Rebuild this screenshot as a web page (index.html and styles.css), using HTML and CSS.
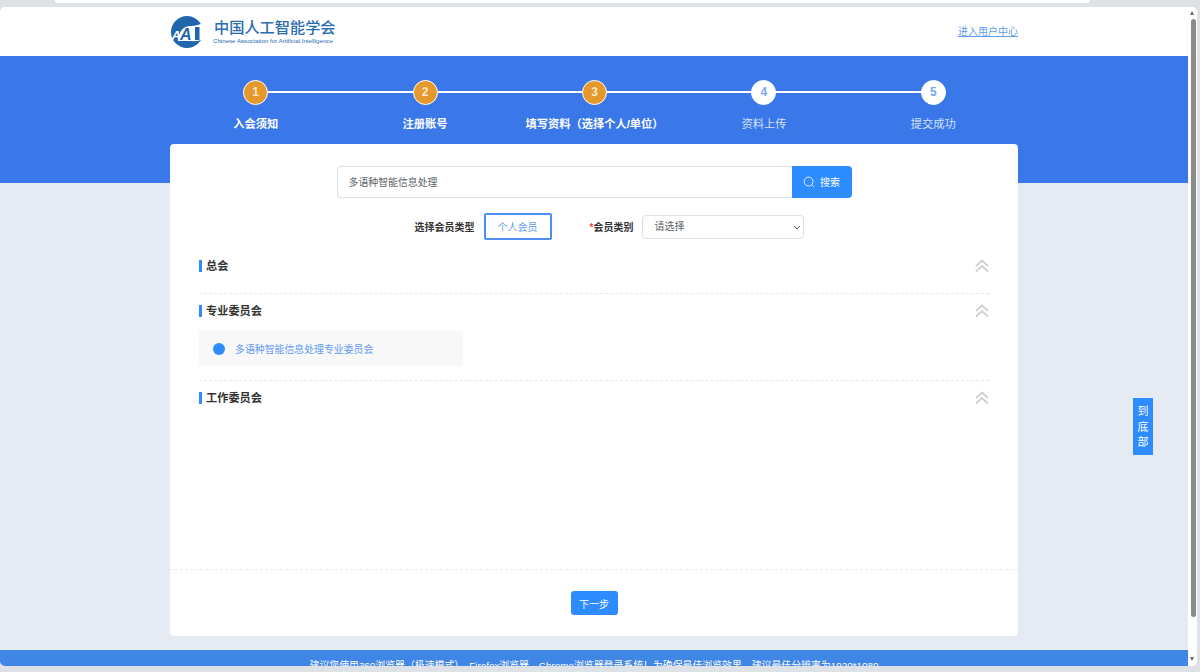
FILE: index.html
```html
<!DOCTYPE html>
<html lang="zh-CN">
<head>
    <meta charset="UTF-8">
    <meta name="viewport" content="width=device-width, initial-scale=1.0">
    <title>入会申请</title>
    <link rel="stylesheet" href="styles.css">
</head>
<body>
    <div class="browser-top"><div class="omnibox"></div></div>

    <div class="browser-window">
        <div class="page">
            <header class="site-header">
                <div class="logo">
                    <svg class="logo-mark" viewBox="0 0 32 32" width="32" height="32">
                        <circle cx="16" cy="16" r="16" fill="#1f66ad"/>
                        <path d="M7 25 C8 14 13 10 20 10 C24 10 28 9 32 7 L32 23 C27 26 22 25 16 25 Z" fill="#fff"/>
                        <text x="0.5" y="24" class="logo-a-light">A</text>
                        <text x="9" y="24" class="logo-a">A</text>
                        <rect x="24" y="11" width="4.5" height="13" fill="#1f66ad"/>
                    </svg>
                    <div class="logo-text">
                        <div class="logo-cn">中国人工智能学会</div>
                        <div class="logo-en">Chinese Association for Artificial Intelligence</div>
                    </div>
                </div>
                <a class="user-link" href="#">进入用户中心</a>
            </header>

            <section class="banner">
                <div class="steps">
                    <div class="step done"><span class="step-num">1</span><span class="step-label">入会须知</span></div>
                    <div class="step done"><span class="step-num">2</span><span class="step-label">注册账号</span></div>
                    <div class="step done"><span class="step-num">3</span><span class="step-label">填写资料（选择个人/单位）</span></div>
                    <div class="step"><span class="step-num">4</span><span class="step-label">资料上传</span></div>
                    <div class="step"><span class="step-num">5</span><span class="step-label">提交成功</span></div>
                </div>
            </section>

            <main class="content">
                <div class="card">
                    <div class="card-body">
                        <div class="search-row">
                            <input class="search-input" type="text" value="多语种智能信息处理">
                            <button class="search-btn" type="button">
                                <svg viewBox="0 0 14 14" width="12" height="12" fill="none" stroke="#fff" stroke-width="1"><circle cx="6.5" cy="6.5" r="5.2"/><path d="M10.4 10.4 L12.6 12.6"/></svg>
                                搜索
                            </button>
                        </div>

                        <div class="type-row">
                            <span class="type-label">选择会员类型</span>
                            <button class="type-btn" type="button">个人会员</button>
                            <span class="type-label category-label"><i>*</i>会员类别</span>
                            <div class="select-wrap">
                                <select class="type-select"><option>请选择</option></select>
                                <svg class="select-arrow" viewBox="0 0 8 5" width="8" height="5"><path d="M1 1 L4 4 L7 1"/></svg>
                            </div>
                        </div>

                        <div class="group first">
                            <div class="group-head">
                                <h2>总会</h2>
                                <svg class="chevrons" viewBox="0 0 14 14" width="14" height="14"><path d="M1 7 L7 1.5 L13 7 M1 12.5 L7 7 L13 12.5"/></svg>
                            </div>
                        </div>

                        <div class="group">
                            <div class="group-head">
                                <h2>专业委员会</h2>
                                <svg class="chevrons" viewBox="0 0 14 14" width="14" height="14"><path d="M1 7 L7 1.5 L13 7 M1 12.5 L7 7 L13 12.5"/></svg>
                            </div>
                            <div class="group-item"><span class="dot"></span>多语种智能信息处理专业委员会</div>
                        </div>

                        <div class="group last">
                            <div class="group-head">
                                <h2>工作委员会</h2>
                                <svg class="chevrons" viewBox="0 0 14 14" width="14" height="14"><path d="M1 7 L7 1.5 L13 7 M1 12.5 L7 7 L13 12.5"/></svg>
                            </div>
                        </div>
                    </div>

                    <div class="card-foot">
                        <button class="next-btn" type="button">下一步</button>
                    </div>
                </div>
            </main>

            <footer class="site-footer">建议您使用360浏览器（极速模式）、Firefox浏览器、Chrome浏览器登录系统！为确保最佳浏览效果，建议最佳分辨率为1920*1080</footer>

            <a class="to-bottom" href="#">到底部</a>
        </div>

        <div class="scrollbar">
            <span class="arrow-up"></span>
            <div class="thumb"></div>
            <span class="arrow-down"></span>
        </div>
    </div>
</body>
</html>
```

FILE: styles.css
```css
/* Basic Reset */
* {
    margin: 0;
    padding: 0;
    box-sizing: border-box;
    font-family: "Liberation Sans", "Noto Sans CJK SC", sans-serif;
}

body {
    width: 1200px;
    height: 672px;
    overflow: hidden;
    background-color: #dee1e6;
}

/* Browser frame */
.browser-top {
    height: 7px;
    padding-left: 55px;
}

.omnibox {
    width: 1035px;
    height: 3px;
    background-color: #fff;
    border-radius: 0 0 6px 6px;
}

.browser-window {
    display: flex;
    width: 1197px;
    height: 659px;
    background-color: #fff;
    border-radius: 5px;
    overflow: hidden;
}

.page {
    position: relative;
    width: 1188px;
    height: 100%;
    overflow: hidden;
    background-color: #e6eaf3;
}

/* Scrollbar */
.scrollbar {
    position: relative;
    flex: 1;
    padding: 12px 1px 0 3px;
    background-color: #fff;
}

.thumb {
    height: 598px;
    border-radius: 3px;
    background-color: #8a8a8a;
}

.arrow-up,
.arrow-down {
    position: absolute;
    left: 2px;
    width: 0;
    height: 0;
    border-left: 2.5px solid transparent;
    border-right: 2.5px solid transparent;
}

.arrow-up {
    top: 4px;
    border-bottom: 4px solid #666;
}

.arrow-down {
    bottom: 5px;
    border-top: 4px solid #666;
}

/* Header */
.site-header {
    display: flex;
    justify-content: space-between;
    align-items: center;
    height: 49px;
    padding: 0 170px;
    background-color: #fff;
}

.logo {
    display: flex;
    align-items: center;
    gap: 10px;
    margin-top: 1px;
    margin-left: 1px;
}

.logo-a,
.logo-a-light {
    font-family: "Liberation Sans", sans-serif;
    font-weight: bold;
    font-style: italic;
}

.logo-a {
    font-size: 16px;
    fill: #1f66ad;
}

.logo-a-light {
    font-size: 13px;
    fill: #fff;
}

.logo-cn {
    padding-left: 1px;
    font-size: 15.2px;
    font-weight: 500;
    line-height: 17px;
    color: #2a6db0;
}

.logo-en {
    font-size: 6.15px;
    line-height: 9px;
    color: #2a6db0;
    white-space: nowrap;
}

.user-link {
    padding-bottom: 2px;
    font-size: 10px;
    color: #5f9bf0;
}

/* Steps banner */
.banner {
    height: 127px;
    padding: 24px 170px 0 171px;
    background-color: #3a78ea;
}

.steps {
    display: flex;
}

.step {
    position: relative;
    flex: 1;
    display: flex;
    flex-direction: column;
    align-items: center;
    color: #d5e2fa;
}

/* Line to the next step */
.step::after {
    content: "";
    position: absolute;
    top: 11px;
    left: 50%;
    width: 100%;
    height: 1.5px;
    background-color: #fff;
}

.step:last-child::after {
    display: none;
}

.step-num {
    position: relative;
    z-index: 1;
    width: 25px;
    height: 25px;
    border: 1.5px solid #fff;
    border-radius: 50%;
    background-color: #fff;
    color: #74a8f5;
    font-size: 12px;
    font-weight: bold;
    line-height: 22px;
    text-align: center;
}

.step-label {
    margin-top: 12px;
    font-size: 11.25px;
    line-height: 14px;
    white-space: nowrap;
}

.step.done {
    color: #fff;
}

.step.done .step-num {
    background-color: #e5992c;
    color: #fbe9cc;
}

.step.done .step-label {
    font-weight: bold;
}

/* Main card */
.content {
    padding: 0 170px;
}

.card {
    display: flex;
    flex-direction: column;
    height: 492px;
    margin-top: -39px;
    position: relative;
    background-color: #fff;
    border-radius: 4px;
}

.card-body {
    flex: 1;
    padding: 22px 29px 0;
}

/* Search */
.search-row {
    display: flex;
    justify-content: center;
}

.search-input {
    width: 455px;
    height: 32px;
    padding: 0 11px 1px;
    font-size: 9.9px;
    color: #606266;
    border: 1px solid #dcdfe6;
    border-right: none;
    border-radius: 4px 0 0 4px;
    outline: none;
}

.search-btn {
    display: flex;
    align-items: center;
    justify-content: center;
    gap: 5px;
    width: 60px;
    height: 32px;
    padding-bottom: 1px;
    font-size: 10px;
    color: #fff;
    background-color: #2d8cff;
    border: none;
    border-radius: 0 4px 4px 0;
}

/* Member type */
.type-row {
    display: flex;
    align-items: center;
    justify-content: center;
    height: 27px;
    margin-top: 15px;
    padding-left: 31px;
}

.type-label {
    font-size: 10px;
    color: #333;
    font-weight: bold;
    margin-right: 9px;
}

.type-label i {
    color: #e8483f;
    font-style: normal;
}

.category-label {
    margin-left: 38px;
    margin-right: 9px;
}

.type-btn {
    width: 68px;
    height: 27px;
    font-size: 10px;
    color: #5f9bf0;
    background-color: #fff;
    border: 2px solid #4d8ff0;
    border-radius: 2px;
}

.select-wrap {
    position: relative;
    height: 24px;
}

.type-select {
    display: block;
    width: 162px;
    height: 24px;
    padding-left: 11px;
    font-size: 10px;
    color: #606266;
    background-color: #fff;
    border: 1px solid #dcdfe6;
    border-radius: 4px;
    appearance: none;
}

.select-arrow {
    position: absolute;
    top: 10px;
    right: 3px;
    fill: none;
    stroke: #555;
    stroke-width: 1;
}

/* Member groups */
.group {
    padding-top: 10px;
    padding-bottom: 14px;
    border-bottom: 1px dashed #e8e8e8;
}

.group.first {
    margin-top: 19px;
    padding-top: 0;
    padding-bottom: 20px;
}

.group.last {
    border-bottom: none;
}

.group-head {
    display: flex;
    justify-content: space-between;
    align-items: center;
    height: 14px;
}

.group-head h2 {
    padding-left: 4px;
    font-size: 11.2px;
    line-height: 12px;
    color: #333;
    border-left: 3px solid #2d8cff;
}

.chevrons {
    fill: none;
    stroke: #cfcfcf;
    stroke-width: 1.7;
}

.group-item {
    display: flex;
    align-items: center;
    width: 264px;
    height: 35px;
    margin-top: 13px;
    padding-left: 14px;
    font-size: 9.9px;
    color: #5f9bf5;
    background-color: #f8f8f8;
}

.dot {
    width: 12px;
    height: 12px;
    margin-right: 10px;
    border-radius: 50%;
    background-color: #2d8cff;
}

/* Card footer */
.card-foot {
    display: flex;
    justify-content: center;
    height: 67px;
    padding-top: 21px;
    border-top: 1px dashed #ececec;
}

.next-btn {
    width: 47px;
    height: 24px;
    font-size: 10px;
    color: #fff;
    background-color: #2d8cff;
    border: none;
    border-radius: 3px;
}

/* Footer */
.site-footer {
    height: 40px;
    margin-top: 14px;
    padding-top: 9px;
    font-size: 9.9px;
    line-height: 14px;
    text-align: center;
    color: #fff;
    background-color: #3f86e6;
}

/* Jump to bottom */
.to-bottom {
    position: absolute;
    top: 391px;
    left: 1133px;
    width: 20px;
    height: 57px;
    padding-top: 6px;
    font-size: 11px;
    line-height: 15.5px;
    text-align: center;
    text-decoration: none;
    color: #fff;
    background-color: #2d8cff;
}
```
